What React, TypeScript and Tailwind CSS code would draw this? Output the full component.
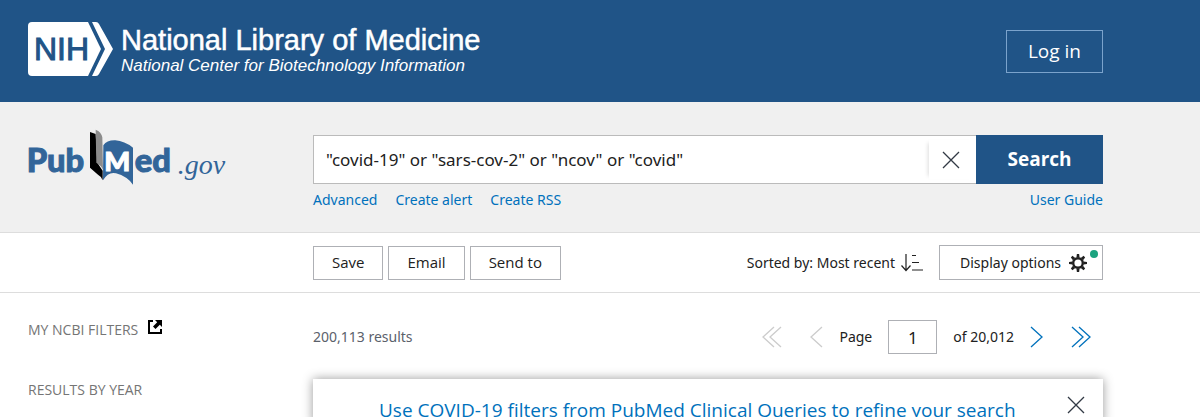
import { useState } from 'react';

const NihLogo = () => (
  <svg width="85" height="54" viewBox="0 0 85 54" aria-hidden="true">
    <path d="M4 0H60L73 27L60 54H4Q0 54 0 50V4Q0 0 4 0Z" fill="#fff" />
    <path d="M64 0H68Q70 0 71 2L85 27L71 52Q70 54 68 54H64L77 27Z" fill="#fff" />
    <text
      x="6"
      y="38"
      fontFamily="'Liberation Sans', Arial, sans-serif"
      fontSize="32"
      fill="#205487"
      stroke="#205487"
      strokeWidth="1"
    >
      NIH
    </text>
  </svg>
);

const PubMedLogo = () => (
  <svg width="200" height="56" viewBox="21 27 600 168" role="img" aria-label="PubMed.gov">
    <g
      fontFamily="Lato, 'Open Sans', sans-serif"
      fontSize="98"
      fontWeight="900"
      fill="#326599"
      stroke="#326599"
      strokeWidth="3"
    >
      <text x="17" y="157">Pub</text>
      <text x="341" y="157">ed</text>
    </g>
    {/* Open book */}
    <path d="M207 36L224 42L229 128L245 152V181Q240 168 231 164L207 143Z" fill="#000" />
    <path d="M224 29Q241 36 244 52L246 150Q243 138 226 128Z" fill="#8c8c8c" />
    <path d="M247 76Q258 60 283 61Q310 63 336 83V194Q318 169 285 160Q262 154 246 181Z" fill="#326599" />
    <text
      x="250"
      y="154"
      fontFamily="Lato, 'Open Sans', sans-serif"
      fontSize="82"
      fontWeight="900"
      fill="#fff"
      stroke="#fff"
      strokeWidth="3"
    >
      M
    </text>
    <text
      x="470"
      y="163"
      fontFamily="'Liberation Serif', 'Times New Roman', serif"
      fontSize="84"
      fontStyle="italic"
      fill="#326599"
    >
      .gov
    </text>
  </svg>
);

const CloseIcon = () => (
  <svg width="18" height="18" viewBox="0 0 18 18" fill="none" stroke="#323a45" strokeWidth="1.3" aria-hidden="true">
    <path d="M1 1L17 17M17 1L1 17" />
  </svg>
);

const SortIcon = () => (
  <svg width="22" height="18" viewBox="0 0 22 18" fill="none" stroke="#212121" strokeWidth="1.2" aria-hidden="true">
    <path d="M5 0V16M0.5 11.5L5 16.5L9.5 11.5M11 1.5H15M11 8.5H18M11 16H22" />
  </svg>
);

const GearIcon = () => (
  <svg width="18" height="18" viewBox="-9 -9 18 18" aria-hidden="true">
    <circle r="4.8" fill="none" stroke="#212121" strokeWidth="2.4" />
    {[0, 45, 90, 135, 180, 225, 270, 315].map((angle) => (
      <path key={angle} d="M-1.6 -5.5L-1.1 -9H1.1L1.6 -5.5Z" fill="#212121" transform={`rotate(${angle})`} />
    ))}
  </svg>
);

const ExternalIcon = () => (
  <svg width="14" height="14" viewBox="0 0 14 14" aria-hidden="true">
    <path d="M5 1H1V13H13V9" fill="none" stroke="#000" strokeWidth="2" />
    <path d="M7 0H14V7L11.8 4.8L7.5 9L5 6.5L9.2 2.2Z" fill="#000" />
  </svg>
);

const Chevron = ({ direction, double }: { direction: 'left' | 'right'; double?: boolean }) => (
  <svg
    width={double ? 20 : 13}
    height="22"
    viewBox={double ? '0 0 20 22' : '0 0 13 22'}
    fill="none"
    stroke="currentColor"
    strokeWidth="1.3"
    aria-hidden="true"
  >
    {direction === 'left' ? (
      <path d={double ? 'M12 1L1 11L12 21M19 1L8 11L19 21' : 'M12 1L1 11L12 21'} />
    ) : (
      <path d={double ? 'M1 1L12 11L1 21M8 1L19 11L8 21' : 'M1 1L12 11L1 21'} />
    )}
  </svg>
);

const actions = ['Save', 'Email', 'Send to'];

const App = () => {
  const [query, setQuery] = useState('"covid-19" or "sars-cov-2" or "ncov" or "covid"');
  const [page, setPage] = useState('1');

  return (
    <div className="min-h-screen bg-white font-['Noto_Sans','Open_Sans',sans-serif] text-[#212121]">
      <header className="flex items-start justify-between bg-[#205487] pt-[22px] pr-[97px] pb-[26px] pl-7 text-white">
        <a href="#" className="flex items-start gap-2 font-['Liberation_Sans',Arial,sans-serif]">
          <NihLogo />
          <span className="flex flex-col pt-0.5">
            <span className="text-[29px] leading-8 [-webkit-text-stroke:0.5px_white]">
              National Library of Medicine
            </span>
            <span className="text-[17px] leading-5 italic">National Center for Biotechnology Information</span>
          </span>
        </a>
        <button
          type="button"
          className="mt-2 h-[43px] border border-[#7ba3cc] px-[21px] font-['Open_Sans',sans-serif] text-[19px]"
        >
          Log in
        </button>
      </header>

      <section className="flex items-start border-b border-[#dddddd] bg-[#f0f0f0] pt-[33px] pr-[97px] pb-[22px] pl-7">
        <a href="#" className="-mt-1.5 w-[285px] shrink-0">
          <PubMedLogo />
        </a>
        <div className="flex-1">
          <form className="flex" onSubmit={(e) => e.preventDefault()}>
            <div className="flex h-[49px] flex-1 border border-r-0 border-[#bbbbbb] bg-white">
              <input
                type="text"
                aria-label="Search term"
                value={query}
                onChange={(e) => setQuery(e.target.value)}
                className="min-w-0 flex-1 px-3 text-[17px] outline-none"
              />
              <button
                type="button"
                aria-label="Clear search input"
                onClick={() => setQuery('')}
                className="my-1 flex w-[47px] items-center justify-center bg-white pr-1 shadow-[-4px_0_4px_-3px_#dddddd]"
              >
                <CloseIcon />
              </button>
            </div>
            <button
              type="submit"
              className="w-[127px] bg-[#205487] font-['Open_Sans',sans-serif] text-[19px] font-bold text-white"
            >
              Search
            </button>
          </form>
          <nav className="mt-1.5 flex gap-[18px] text-sm text-[#0071bc]">
            <a href="#">Advanced</a>
            <a href="#">Create alert</a>
            <a href="#">Create RSS</a>
            <a href="#" className="ml-auto">
              User Guide
            </a>
          </nav>
        </div>
      </section>

      <section className="flex items-center border-b border-[#dddddd] py-3 pr-[97px] pl-[313px] text-sm">
        <div className="flex gap-[5px] font-['Open_Sans',sans-serif] text-[15px]">
          {actions.map((label) => (
            <button key={label} type="button" className="h-[34px] border border-[#aeb0b5] px-[18px]">
              {label}
            </button>
          ))}
        </div>
        <button type="button" className="ml-auto flex items-center gap-1.5">
          Sorted by: Most recent
          <SortIcon />
        </button>
        <button
          type="button"
          className="relative ml-4 flex h-[35px] items-center gap-2 border border-[#aeb0b5] pr-[15px] pl-5"
        >
          Display options
          <GearIcon />
          <span className="absolute top-1 right-1 h-2 w-2 rounded-full bg-[#1ba37f]" />
        </button>
      </section>

      <div className="flex pr-[97px] pl-7">
        <aside className="flex w-[285px] shrink-0 flex-col gap-10 pt-[27px] font-['Open_Sans',sans-serif] text-sm text-[#757575]">
          <h3 className="flex items-start gap-2.5">
            MY NCBI FILTERS
            <a href="#" aria-label="My NCBI filters">
              <ExternalIcon />
            </a>
          </h3>
          <h3>RESULTS BY YEAR</h3>
        </aside>

        <main className="flex-1 pt-[27px]">
          <div className="flex h-[34px] items-center text-sm">
            <span className="text-[#5b616b]">200,113 results</span>
            <div className="ml-auto flex items-center">
              <button type="button" aria-label="First page" disabled className="text-[#cccccc]">
                <Chevron direction="left" double />
              </button>
              <button type="button" aria-label="Previous page" disabled className="ml-7 text-[#cccccc]">
                <Chevron direction="left" />
              </button>
              <label htmlFor="page-number" className="ml-4">
                Page
              </label>
              <input
                id="page-number"
                type="text"
                value={page}
                onChange={(e) => setPage(e.target.value)}
                className="mx-4 h-[34px] w-[49px] border border-[#aeb0b5] text-center text-[17px]"
              />
              <span>of 20,012</span>
              <button type="button" aria-label="Next page" className="ml-4 text-[#0071bc]">
                <Chevron direction="right" />
              </button>
              <button type="button" aria-label="Last page" className="mr-3 ml-7 text-[#0071bc]">
                <Chevron direction="right" double />
              </button>
            </div>
          </div>

          <div className="mt-[25px] flex items-start justify-between bg-white pt-[17px] pr-[18px] pl-[66px] shadow-[0_0_10px_#999999]">
            <a href="#" className="font-['Open_Sans',sans-serif] text-[19px] leading-7 text-[#0071bc]">
              Use COVID-19 filters from PubMed Clinical Queries to refine your search
            </a>
            <button type="button" aria-label="Close">
              <CloseIcon />
            </button>
          </div>
        </main>
      </div>
    </div>
  );
};

export default App;
